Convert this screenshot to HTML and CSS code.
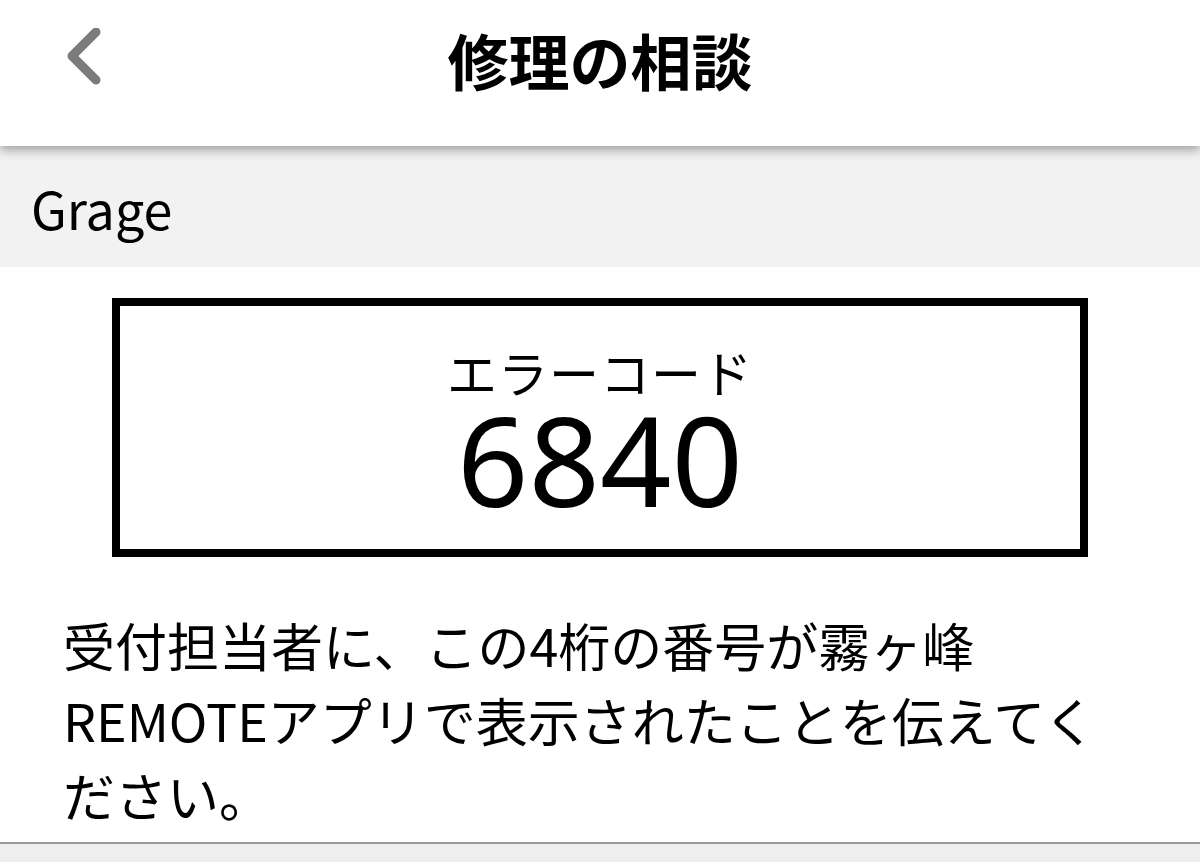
FILE: index.html
```html
<!DOCTYPE html>
<html lang="ja">
<head>
<meta charset="utf-8">
<link rel="stylesheet" href="styles.css">
</head>
<body>
<div class="page">
  <header class="topbar">
    <div class="back">
      <svg width="40" height="60" viewBox="0 0 40 60"><path d="M32 4 L8 28 L32 52" fill="none" stroke="#7b7b7b" stroke-width="9" stroke-linecap="round" stroke-linejoin="round"/></svg>
    </div>
    <h1 class="title">修理の相談</h1>
  </header>
  <div class="band">Grage</div>
  <main class="content">
    <div class="codebox">
      <div class="label">エラーコード</div>
      <div class="code">6840</div>
    </div>
    <p class="message">受付担当者に、この4桁の番号が霧ヶ峰REMOTEアプリで表示されたことを伝えてください。</p>
  </main>
  <div class="footer"></div>
</div>
</body>
</html>
```
FILE: styles.css
```css
* { box-sizing: border-box; }
html, body { margin: 0; padding: 0; }
body {
  width: 1200px;
  height: 862px;
  overflow: hidden;
  background: #fff;
  font-family: "Noto Sans CJK JP", "Noto Sans", sans-serif;
  color: #000;
}
.page { display: flex; flex-direction: column; height: 862px; }
.topbar {
  position: relative;
  height: 146px;
  flex: none;
  background: #fff;
  display: flex;
  align-items: center;
  justify-content: center;
  box-shadow: 0 4px 10px rgba(0,0,0,0.35);
  z-index: 2;
}
.back {
  position: absolute;
  left: 64px;
  top: 28px;
}
.title {
  margin: 0;
  font-size: 61px;
  font-weight: 700;
  line-height: 1;
  margin-top: -28px;
}
.band {
  flex: none;
  height: 121px;
  background: #f2f2f2;
  padding-left: 31px;
  font-size: 52px;
  line-height: 1;
  padding-top: 36px;
}
.content { flex: 1; padding: 31px 0 0; }
.codebox {
  margin: 0 112px;
  height: 259px;
  border: 8px solid #000;
  display: flex;
  flex-direction: column;
  align-items: center;
  padding-top: 40px;
}
.label {
  font-size: 50px;
  line-height: 1;
  letter-spacing: 1px;
}
.code {
  font-family: "Noto Sans", sans-serif;
  font-size: 125px;
  line-height: 1;
  margin-top: 0px;
}
.message {
  margin: 50px 0 0;
  padding: 0 100px 0 63px;
  font-size: 52px;
  line-height: 75px;
}
.footer {
  flex: none;
  height: 20px;
  border-top: 2px solid #999;
  background: #eee;
}
```
